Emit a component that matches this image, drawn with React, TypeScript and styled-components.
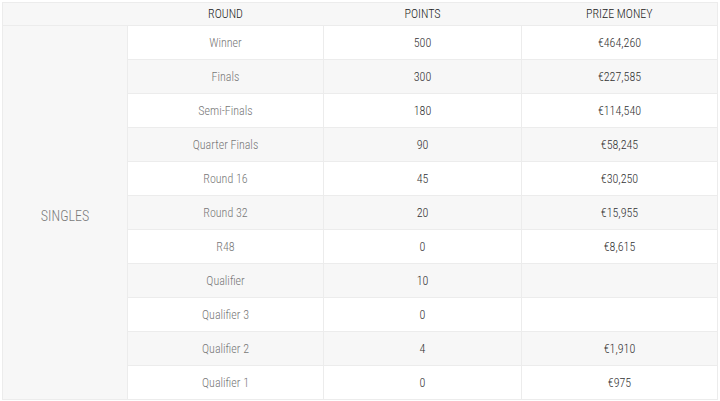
import styled, { createGlobalStyle } from "styled-components";

const GlobalStyle = createGlobalStyle`
  body {
    margin: 0;
    background: #ffffff;
    font-family: "Roboto Condensed", "Liberation Sans Narrow", Roboto, sans-serif;
  }
`;

const Wrapper = styled.div`
  padding: 2px 2px 0 2px;
`;

const Table = styled.table`
  width: 716px;
  border-collapse: collapse;
  table-layout: fixed;
  font-size: 12px;
  font-weight: 300;
  border: 1px solid #ececec;
`;

const HeadCell = styled.th`
  height: 22px;
  padding: 0;
  background: #f7f7f7;
  color: #222222;
  font-weight: 300;
  text-align: center;
  border-bottom: 1px solid #ececec;
`;

const EventCell = styled.td`
  padding: 6px 0 0;
  background: #f7f7f7;
  color: #7a7a7a;
  font-size: 14px;
  font-weight: 300;
  text-align: center;
  border-right: 1px solid #ececec;
`;

const Row = styled.tr<{ $shaded: boolean }>`
  background: ${(p) => (p.$shaded ? "#f7f7f7" : "#ffffff")};
`;

const Cell = styled.td<{ $muted?: boolean }>`
  height: 33px;
  padding: 0;
  text-align: center;
  color: ${(p) => (p.$muted ? "#777777" : "#333333")};
  border-bottom: 1px solid #ececec;
  border-right: 1px solid #ececec;
  &:last-child {
    border-right: none;
  }
`;

const rounds = [
  { round: "Winner", points: "500", prize: "€464,260" },
  { round: "Finals", points: "300", prize: "€227,585" },
  { round: "Semi-Finals", points: "180", prize: "€114,540" },
  { round: "Quarter Finals", points: "90", prize: "€58,245" },
  { round: "Round 16", points: "45", prize: "€30,250" },
  { round: "Round 32", points: "20", prize: "€15,955" },
  { round: "R48", points: "0", prize: "€8,615" },
  { round: "Qualifier", points: "10", prize: "" },
  { round: "Qualifier 3", points: "0", prize: "" },
  { round: "Qualifier 2", points: "4", prize: "€1,910" },
  { round: "Qualifier 1", points: "0", prize: "€975" },
];

const App = () => {
  return (
    <Wrapper>
      <GlobalStyle />
      <Table>
        <colgroup>
          <col style={{ width: 125 }} />
          <col style={{ width: 196 }} />
          <col style={{ width: 198 }} />
          <col />
        </colgroup>
        <thead>
          <tr>
            <HeadCell></HeadCell>
            <HeadCell>ROUND</HeadCell>
            <HeadCell>POINTS</HeadCell>
            <HeadCell>PRIZE MONEY</HeadCell>
          </tr>
        </thead>
        <tbody>
          {rounds.map((r, i) => (
            <Row key={r.round} $shaded={i % 2 === 1}>
              {i === 0 && <EventCell rowSpan={rounds.length}>SINGLES</EventCell>}
              <Cell $muted>{r.round}</Cell>
              <Cell>{r.points}</Cell>
              <Cell>{r.prize}</Cell>
            </Row>
          ))}
        </tbody>
      </Table>
    </Wrapper>
  );
};

export default App;
